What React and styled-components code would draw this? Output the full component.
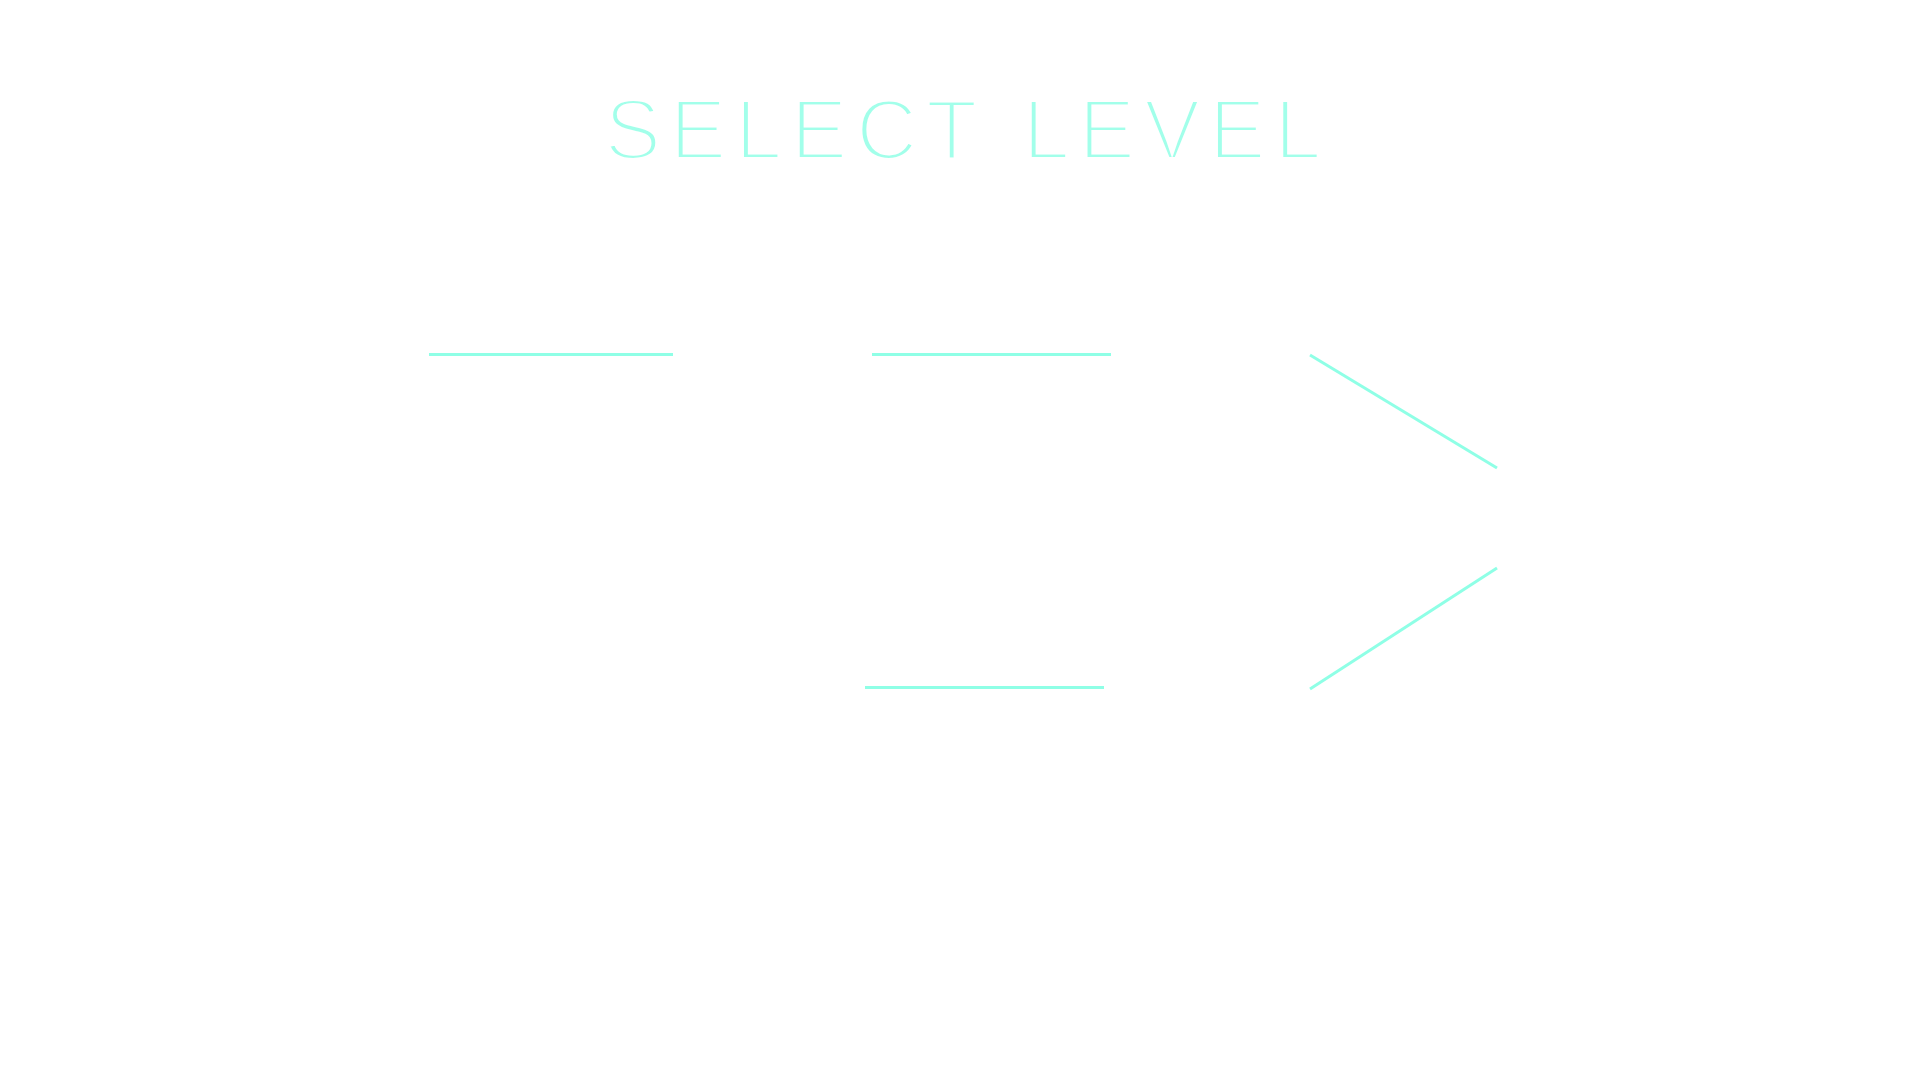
import React from "react";
import styled, { createGlobalStyle } from "styled-components";

const GlobalStyle = createGlobalStyle`
  html, body {
    margin: 0;
    padding: 0;
    background: #ffffff;
  }
  body {
    font-family: "Liberation Sans", Arial, sans-serif;
  }
`;

const accent = "#8fffe6";

const Screen = styled.div`
  min-height: 100vh;
  width: 100%;
  box-sizing: border-box;
  padding: 87px 0 0 6px;
  display: flex;
  flex-direction: column;
  align-items: center;
`;

// thin hairline title: the white stroke eats into the glyph edges
const Title = styled.h1`
  margin: 0;
  font-family: "Liberation Sans", Arial, sans-serif;
  font-weight: 400;
  font-size: 85px;
  line-height: 85px;
  letter-spacing: 8.5px;
  word-spacing: 6px;
  text-indent: 8.5px;
  color: #a2ffea;
  -webkit-text-stroke: 4px #ffffff;
  text-transform: uppercase;
`;

const Board = styled.div`
  margin-top: 61px;
  display: grid;
  grid-template-columns: 244px 239px 187px;
  grid-template-rows: 123px 123px;
  column-gap: 199px;
  row-gap: 210px;
`;

const Level = styled.button`
  grid-column: ${({ $col }) => $col};
  grid-row: ${({ $row }) => $row};
  margin: 0 0 0 ${({ $nudge }) => $nudge || 0}px;
  padding: 0;
  width: 100%;
  background: transparent;
  border: none;
  border-bottom: 3px solid ${accent};
  color: #ffffff;
  font-family: "Liberation Sans", Arial, sans-serif;
  font-size: 40px;
  cursor: pointer;
`;

const NextButton = styled.button`
  grid-column: 3;
  grid-row: 1 / span 2;
  align-self: end;
  margin: 0 0 -1px 0;
  padding: 0;
  border: none;
  background: transparent;
  width: 187px;
  height: 336px;
  cursor: pointer;

  svg {
    display: block;
    overflow: visible;
  }
`;

const levels = [
  { id: 1, col: 1, row: 1 },
  { id: 2, col: 2, row: 1 },
  { id: 3, col: 2, row: 2, nudge: -7 },
];

function Chevron() {
  return (
    <svg width="187" height="336" viewBox="0 0 187 336">
      <line x1="0" y1="1" x2="187" y2="114" stroke={accent} strokeWidth="3" />
      <line x1="187" y1="214" x2="0" y2="335" stroke={accent} strokeWidth="3" />
    </svg>
  );
}

export default function App() {
  return (
    <>
      <GlobalStyle />
      <Screen>
        <Title>Select Level</Title>
        <Board>
          {levels.map((lv) => (
            <Level key={lv.id} $col={lv.col} $row={lv.row} $nudge={lv.nudge}>
              {lv.id}
            </Level>
          ))}
          <NextButton aria-label="Next">
            <Chevron />
          </NextButton>
        </Board>
      </Screen>
    </>
  );
}
